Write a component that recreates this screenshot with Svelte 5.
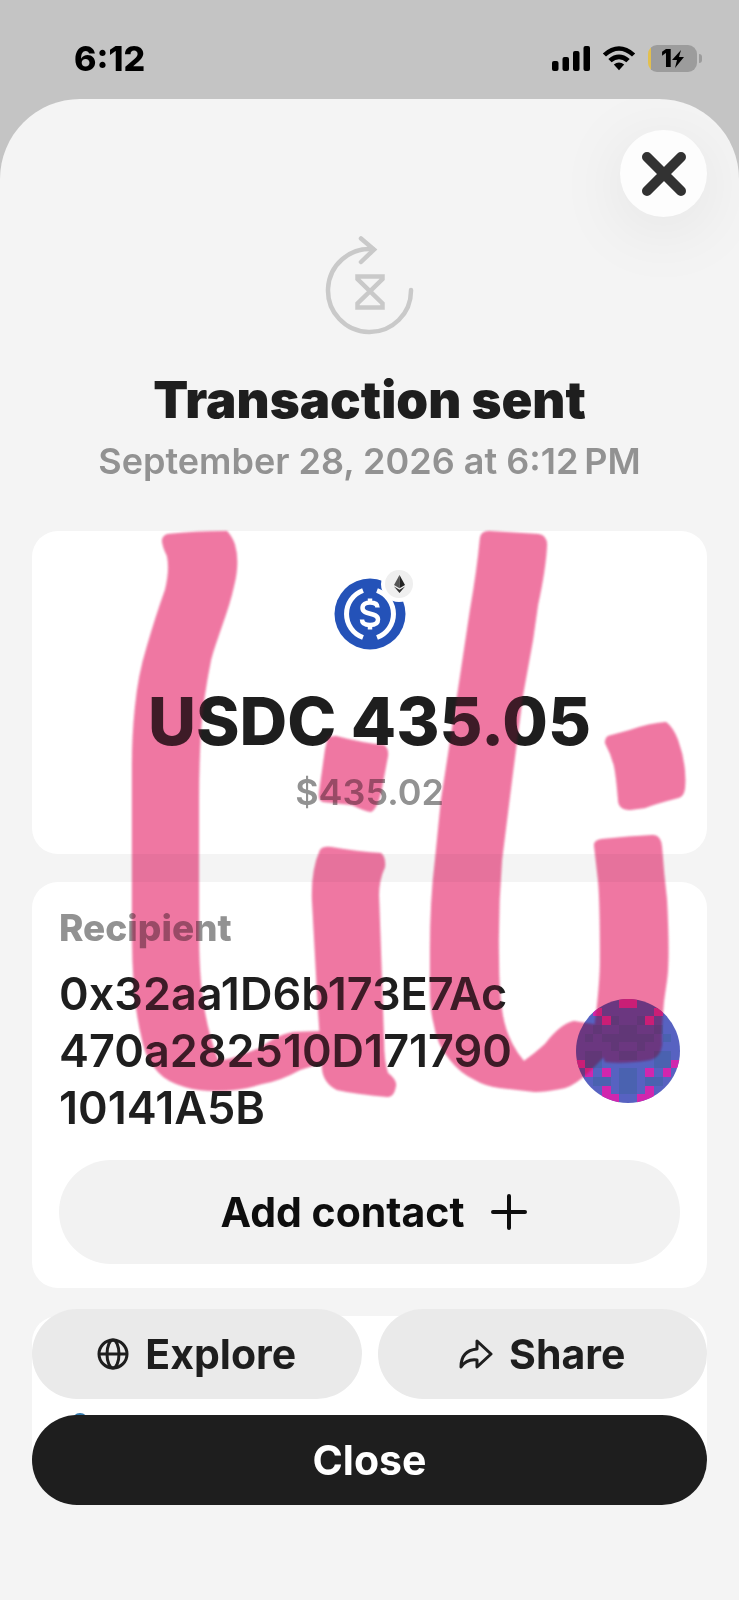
<script lang="ts">
  // Transaction details
  const transaction = {
    title: "Transaction sent",
    date: "September 28, 2026 at 6:12\u2009PM",
    amount: "USDC 435.05",
    fiat: "$435.02",
    addressLines: ["0x32aa1D6b173E7Ac", "470a282510D171790", "10141A5B"],
  };

  // Identicon rows: p = pink, d = dark blue, . = base
  const identicon = [
    ".....pp.....",
    "..p......p..",
    "...pd..dp...",
    "..d..dd..d..",
    ".d.dddddd.d.",
    "....d..d....",
    ".dd..dd..dd.",
    "pdd......ddp",
    ".p.p.dd.p.p.",
    "..dd.dd.dd..",
    "...p.dd.p...",
    "...pp..pp...",
  ];
  const cellColors: Record<string, string> = { p: "#d126ae", d: "#4a62b0" };
  const cells = identicon.flatMap((row, y) =>
    [...row].map((c, x) => ({ x, y, fill: cellColors[c] })).filter((c) => c.fill)
  );

  // Marker strokes
  const strokes = [
    "M168 534Q195 531 227 531Q233 538 235 545Q240 562 234 586C229 610 216 640 211 660Q203 700 201 730Q199 765 199 800V930Q199 975 203 1000Q207 1030 218 1060C232 1061 250 1051 260 1048Q280 1033 295 1032L322 1031V1063L300 1070Q280 1081 262 1084Q240 1091 216 1091Q198 1091 185 1087Q167 1082 158 1072Q147 1060 143 1044Q136 1015 134 990Q132 960 132 930V765Q132 735 135 707Q138 675 147 646Q156 615 165 590Q170 570 167 556Q162 546 162 540Q163 535 168 534Z",
    "M328 737L336 736Q362 743 384 745Q389 749 388 756L381 793Q377 809 371 812Q364 811 352 805L323 802Q318 800 319 793L325 750Z",
    "M320 850Q323 846 331 847Q360 852 381 853Q386 857 385 867Q379 880 379 895L384 1040Q384 1062 388 1073Q397 1080 396 1086Q394 1097 388 1097Q355 1094 337 1090Q323 1083 322 1068L318 1010L312 900Q311 870 320 850Z",
    "M480 538Q481 531 489 531L538 534Q547 535 547 545Q546 568 538 605L533 640L523 695L512 780L502 860Q498 910 499 960Q499 990 502 1010Q506 1040 524 1061Q534 1054 545 1044Q560 1024 574 1021L598 1025L610 1050Q594 1068 582 1078Q570 1088 560 1089Q545 1092 535 1092L500 1088Q485 1086 475 1080Q460 1073 450 1060Q437 1045 434 1025Q430 1010 430 990V950Q430 900 435 860L441 800L458 690L470 610Q477 570 480 538Z",
    "M608 736L630 730Q650 723 666 722Q673 727 678 740Q687 765 685 788Q684 797 678 798Q655 804 645 808L630 810Q618 810 618 799Q616 775 614 766Q611 754 605 743Q605 738 608 736Z",
    "M594 845Q594 840 602 839Q630 836 653 835Q661 835 662 847Q664 875 667 900Q670 960 667 980Q661 1015 662 1045Q660 1058 650 1060Q625 1064 605 1062L594 1030Q600 985 600 960Q600 900 598 880Z",
  ];
</script>

<main class="screen">
  <div class="status-bar">
    <span class="clock">6:12</span>
    <div class="indicators">
      <svg width="38" height="26" viewBox="0 0 38 26">
        <rect x="0" y="15" width="6.5" height="10" rx="2" />
        <rect x="10.500" y="11" width="6.5" height="14" rx="2" />
        <rect x="21" y="5" width="6.5" height="20" rx="2" />
        <rect x="31.500" y="0" width="6.5" height="25" rx="2" />
      </svg>
      <svg width="34" height="26" viewBox="0 0 34 26">
        <path d="M0.8 7.4Q17-6.8 33.2 7.4L30 10.600Q17-1 4 10.600Z" />
        <path d="M6.300 13Q17 4.200 27.700 13L24.400 16.200Q17 10.200 9.600 16.200Z" />
        <path d="M11.800 18.600Q17 14.500 22.200 18.600L17 24.200Z" />
      </svg>
      <div class="battery">
        <span class="battery-body">
          <span>1</span>
          <svg width="12" height="18" viewBox="0 0 12 18"><path d="M9 0L0 10H5L3 18L12 7H7Z" /></svg>
        </span>
        <span class="battery-nub"></span>
      </div>
    </div>
  </div>

  <section class="sheet">
    <header class="sheet-header">
      <button class="dismiss" aria-label="Dismiss">
        <svg width="46" height="46" viewBox="0 0 46 46" fill="none" stroke="#323232" stroke-width="10" stroke-linecap="round">
          <path d="M6 6L40 40M40 6L6 40" />
        </svg>
      </button>
    </header>

    <div class="summary">
      <svg width="90" height="100" viewBox="0 0 90 100" fill="none" stroke="#c9c9c9" stroke-width="4.500" stroke-linecap="round">
        <path d="M86 54A41.500 41.500 0 1 1 48 13.200" />
        <path d="M36 2.500L49 13.500L36 26" />
        <path d="M32.500 40.500H57.500V43L32.500 67.500V71.500H57.500V67.500L32.500 43Z" stroke-linecap="butt" />
      </svg>
      <h1>{transaction.title}</h1>
      <p class="muted">{transaction.date}</p>
    </div>

    <div class="cards">
      <div class="card amount-card">
        <svg class="coin" width="72" height="72" viewBox="0 0 72 72">
          <circle cx="36" cy="36" r="35.500" fill="#2452b8" />
          <path d="M29 12.500A25 25 0 0 0 29 59.500M43 12.500A25 25 0 0 1 43 59.500" fill="none" stroke="#fff" stroke-width="5" />
          <path d="M43.500 29.500C43.500 25.500 40 24.500 36 24.500S28.500 26.500 28.500 30C28.500 38 44 33.500 44 41.500C44 45.500 41 47 36 47S28 45.500 28 41.500M36 20.500V25M36 46.500V51.500" fill="none" stroke="#fff" stroke-width="4.500" />
          <circle cx="65" cy="6" r="18" fill="#fff" />
          <circle cx="65" cy="6" r="14" fill="#efefef" />
          <path d="M65.500-3L60 7L65.500 10.200Z" fill="#555" />
          <path d="M65.500-3L71 7L65.500 10.200Z" fill="#222" />
          <path d="M60 8.500L65.500 15L71 8.500L65.500 11.800Z" fill="#333" />
        </svg>
        <p class="amount">{transaction.amount}</p>
        <p class="muted">{transaction.fiat}</p>
      </div>

      <div class="card recipient-card">
        <h2>Recipient</h2>
        <div class="recipient">
          <p class="address">
            {#each transaction.addressLines as line}
              <span>{line}</span>
            {/each}
          </p>
          <svg class="avatar" width="104" height="104" viewBox="0 0 12 12" shape-rendering="crispEdges">
            <rect width="12" height="12" fill="#5762c1" />
            {#each cells as cell}
              <rect x={cell.x} y={cell.y} width="1" height="1" fill={cell.fill} />
            {/each}
          </svg>
        </div>
        <button class="add-contact">
          Add contact
          <svg width="36" height="36" viewBox="0 0 36 36" fill="none" stroke="currentColor" stroke-width="4" stroke-linecap="round">
            <path d="M18 2V34M2 18H34" />
          </svg>
        </button>
      </div>

      <div class="card network-card">
        <span class="network-icon"></span>
      </div>

      <svg class="marker marker-tint" viewBox="32 531 675 580" aria-hidden="true">
        {#each strokes as d}
          <path {d} />
        {/each}
      </svg>
      <svg class="marker marker-film" viewBox="32 531 675 580" aria-hidden="true">
        {#each strokes as d}
          <path {d} />
        {/each}
      </svg>
    </div>

    <footer class="actions">
      <button class="secondary">
        <svg width="32" height="32" viewBox="0 0 32 32" fill="none" stroke="currentColor" stroke-width="3">
          <circle cx="16" cy="16" r="14" />
          <ellipse cx="16" cy="16" rx="6" ry="14" />
          <path d="M2 16H30" />
        </svg>
        Explore
      </button>
      <button class="secondary">
        <svg width="34" height="32" viewBox="0 0 34 32" fill="none" stroke="currentColor" stroke-width="3" stroke-linejoin="round">
          <path d="M18 3L32 16L18 29V22C10.500 21 6 23 2 29C2 18 7.500 12 18 11Z" />
        </svg>
        Share
      </button>
      <button class="primary">Close</button>
    </footer>
  </section>
</main>

<style>
  :global(body) {
    margin: 0;
    background: #c4c4c4;
  }

  .screen {
    display: flex;
    flex-direction: column;
    min-height: 100vh;
    font-family: Inter, "Liberation Sans", sans-serif;
    color: #1e1e1e;
    background: #c4c4c4;
  }

  h1,
  h2,
  p {
    margin: 0;
  }

  button {
    display: flex;
    align-items: center;
    justify-content: center;
    padding: 0;
    border: none;
    border-radius: 52px;
    font: inherit;
    font-size: 41px;
    font-weight: 700;
    color: inherit;
    cursor: pointer;
  }

  .status-bar {
    display: flex;
    align-items: center;
    justify-content: space-between;
    box-sizing: border-box;
    height: 99px;
    padding: 18px 37px 0 74px;
    color: #000;
  }

  .clock {
    font-size: 34px;
    font-weight: 800;
  }

  .indicators {
    display: flex;
    align-items: center;
    gap: 12px;
  }

  .battery {
    display: flex;
    align-items: center;
    gap: 2px;
  }

  .battery-body {
    display: flex;
    align-items: center;
    justify-content: center;
    box-sizing: border-box;
    width: 49px;
    height: 27px;
    border-radius: 9px;
    background: linear-gradient(90deg, #e3c04e 3px, #9c9c9c 3px);
    font-size: 24px;
    font-weight: 900;
  }

  .battery-nub {
    width: 3px;
    height: 9px;
    border-radius: 0 4px 4px 0;
    background: #9c9c9c;
  }

  .sheet {
    position: relative;
    flex: 1;
    border-radius: 80px 80px 0 0;
    background: #f4f4f4;
    overflow: hidden;
  }

  .sheet-header {
    display: flex;
    justify-content: flex-end;
    padding: 31px 32px 0;
  }

  .dismiss {
    width: 87px;
    height: 87px;
    background: #fdfdfd;
    box-shadow: 0 12px 72px rgba(0, 0, 0, 0.08);
  }

  .summary {
    display: flex;
    flex-direction: column;
    align-items: center;
    padding: 19px 32px 48px;
  }

  h1 {
    margin: 34px 0 9px;
    font-size: 51px;
    font-weight: 900;
    line-height: 60px;
  }

  .muted {
    font-size: 36px;
    font-weight: 600;
    line-height: 44px;
    color: #929292;
  }

  .cards {
    position: relative;
    display: flex;
    flex-direction: column;
    gap: 28px;
    padding: 0 32px;
  }

  .card {
    border-radius: 26px;
    background: #fff;
  }

  .amount-card {
    display: flex;
    flex-direction: column;
    align-items: center;
    padding: 47px 24px 40px;
  }

  .coin {
    overflow: visible;
  }

  .amount {
    margin: 31px 0 9px;
    font-size: 66px;
    font-weight: 800;
    line-height: 80px;
  }

  .recipient-card {
    padding: 24px 27px;
  }

  h2 {
    font-size: 37px;
    font-weight: 800;
    line-height: 44px;
    color: #929292;
  }

  .recipient {
    display: flex;
    align-items: center;
    justify-content: space-between;
    margin: 15px 0 24px;
  }

  .address {
    font-size: 45px;
    font-weight: 600;
    line-height: 57px;
  }

  .address span {
    display: block;
  }

  .avatar {
    border-radius: 50%;
  }

  .add-contact {
    gap: 26px;
    width: 100%;
    height: 104px;
    padding-left: 8px;
    background: #f2f2f2;
    color: #0e0e0e;
  }

  .network-card {
    box-sizing: border-box;
    height: 144px;
    padding: 97px 40px 0;
    border-radius: 26px 26px 0 0;
    overflow: hidden;
  }

  .network-icon {
    display: block;
    width: 16px;
    height: 16px;
    border-radius: 50%;
    background: #3479ab;
  }

  .marker {
    position: absolute;
    top: 0;
    left: 32px;
    width: calc(100% - 64px);
    overflow: visible;
    pointer-events: none;
    filter: blur(1px);
  }

  .marker-tint {
    fill: #ed7ba5;
    mix-blend-mode: multiply;
  }

  .marker-film {
    fill: #fd6193;
    opacity: 0.15;
  }

  .actions {
    position: absolute;
    right: 32px;
    bottom: 95px;
    left: 32px;
    display: grid;
    grid-template-columns: 1fr 1fr;
    gap: 16px;
  }

  .actions button {
    height: 90px;
  }

  .secondary {
    gap: 16px;
    background: #eaeaea;
  }

  .primary {
    grid-column: 1 / -1;
    background: #1e1e1e;
    color: #fff;
  }
</style>
